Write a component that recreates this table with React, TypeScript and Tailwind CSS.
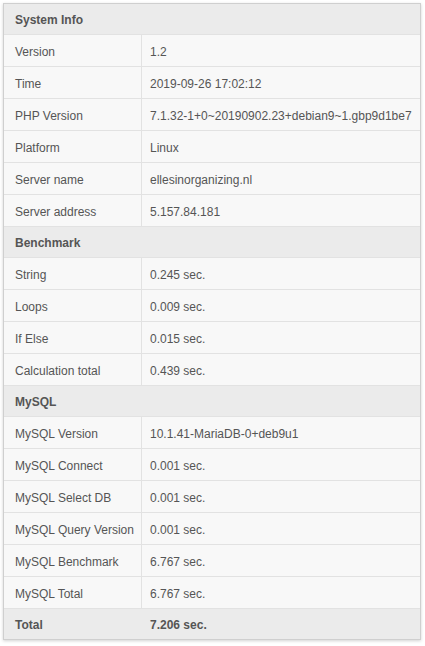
import React from 'react';

type Row = { label: string; value: string };

const sections: { title: string; rows: Row[] }[] = [
  {
    title: 'System Info',
    rows: [
      { label: 'Version', value: '1.2' },
      { label: 'Time', value: '2019-09-26 17:02:12' },
      { label: 'PHP Version', value: '7.1.32-1+0~20190902.23+debian9~1.gbp9d1be7' },
      { label: 'Platform', value: 'Linux' },
      { label: 'Server name', value: 'ellesinorganizing.nl' },
      { label: 'Server address', value: '5.157.84.181' },
    ],
  },
  {
    title: 'Benchmark',
    rows: [
      { label: 'String', value: '0.245 sec.' },
      { label: 'Loops', value: '0.009 sec.' },
      { label: 'If Else', value: '0.015 sec.' },
      { label: 'Calculation total', value: '0.439 sec.' },
    ],
  },
  {
    title: 'MySQL',
    rows: [
      { label: 'MySQL Version', value: '10.1.41-MariaDB-0+deb9u1' },
      { label: 'MySQL Connect', value: '0.001 sec.' },
      { label: 'MySQL Select DB', value: '0.001 sec.' },
      { label: 'MySQL Query Version', value: '0.001 sec.' },
      { label: 'MySQL Benchmark', value: '6.767 sec.' },
      { label: 'MySQL Total', value: '6.767 sec.' },
    ],
  },
];

export default function App() {
  return (
    <div className="min-h-screen bg-white pt-[3px] pl-[3px]" style={{ fontFamily: '"Liberation Sans", Arial, sans-serif' }}>
      <div className="w-[418px] border border-[#cfcfcf] shadow-[0_1px_3px_rgba(0,0,0,0.18)] text-[12px] text-[#555]">
        {sections.map((s, si) => (
          <div key={s.title}>
            <div className={`flex items-center bg-[#ebebeb] pl-[11px] pt-[2px] font-bold ${si > 0 ? 'h-[31px] border-t border-[#e2e2e2]' : 'h-[30px]'}`}>
              {s.title}
            </div>
            {s.rows.map((r) => (
              <div key={r.label} className="h-[32px] flex bg-[#f8f8f8] border-t border-[#e2e2e2]">
                <div className="w-[138px] shrink-0 flex items-center pl-[11px] pt-[2px] border-r border-[#e2e2e2]">{r.label}</div>
                <div className="flex-1 flex items-center pl-[8px] pt-[2px] whitespace-nowrap">{r.value}</div>
              </div>
            ))}
          </div>
        ))}
        <div className="h-[31px] flex bg-[#ebebeb] border-t border-[#e2e2e2] font-bold">
          <div className="w-[138px] shrink-0 flex items-center pl-[11px] pt-[2px]">Total</div>
          <div className="flex-1 flex items-center pl-[8px] pt-[2px]">7.206 sec.</div>
        </div>
      </div>
    </div>
  );
}
